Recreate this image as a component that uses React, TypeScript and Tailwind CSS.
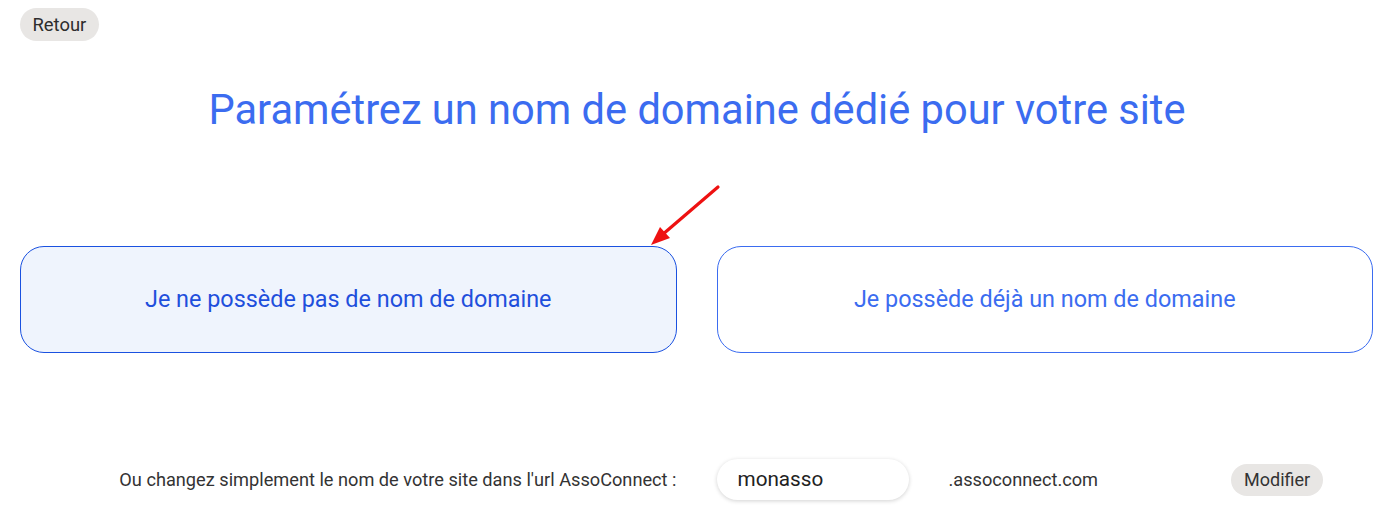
import React from "react";

export default function App() {
  return (
    <div className="w-[1390px] h-[525px] bg-white font-['Roboto',sans-serif] overflow-hidden">
      <div className="pl-5 pt-2">
        <button className="h-[33px] px-[12.5px] rounded-full bg-[#e8e6e4] text-[18.4px] text-[#2d2d2d]">
          Retour
        </button>
      </div>
      <h1 className="mt-[45px] text-center text-[41.6px] leading-[48px] text-[#3b6cf0] pl-[4px]">
        Paramétrez un nom de domaine dédié pour votre site
      </h1>
      <div className="relative mt-[112px] grid grid-cols-2 gap-10 pl-5 pr-[17px]">
        <button className="h-[107px] rounded-[24px] border border-[#1a51e0] bg-[#eff4fd] text-[23.4px] text-[#1f4fdc]">
          Je ne possède pas de nom de domaine
        </button>
        <button className="h-[107px] rounded-[24px] border border-[#3b6cf0] bg-white text-[23.4px] text-[#3b6cf0]">
          Je possède déjà un nom de domaine
        </button>
        <svg
          className="absolute left-[640px] top-[-64px]"
          width="90"
          height="70"
          viewBox="0 0 90 70"
        >
          <line x1="78" y1="5" x2="22" y2="53" stroke="#ee1111" strokeWidth="3.2" strokeLinecap="round" />
          <polygon points="11,63 20,45 30,56" fill="#ee1111" />
        </svg>
      </div>
      <div className="mt-[106px] grid grid-cols-2 gap-10 pl-5 pr-[17px] items-center">
        <div className="text-right text-[18.2px] text-[#333]">
          Ou changez simplement le nom de votre site dans l'url AssoConnect :
        </div>
        <div className="flex items-center">
          <div className="w-[192px] h-[41px] rounded-full bg-white shadow-[0_1px_4px_rgba(0,0,0,0.18)] flex items-center pl-[21px] text-[20.7px] text-[#222]">
            monasso
          </div>
          <div className="ml-10 text-[18.2px] text-[#333]">.assoconnect.com</div>
          <button className="ml-[133px] h-[32px] px-[13px] rounded-full bg-[#e8e6e4] text-[18px] text-[#333]">
            Modifier
          </button>
        </div>
      </div>
    </div>
  );
}
